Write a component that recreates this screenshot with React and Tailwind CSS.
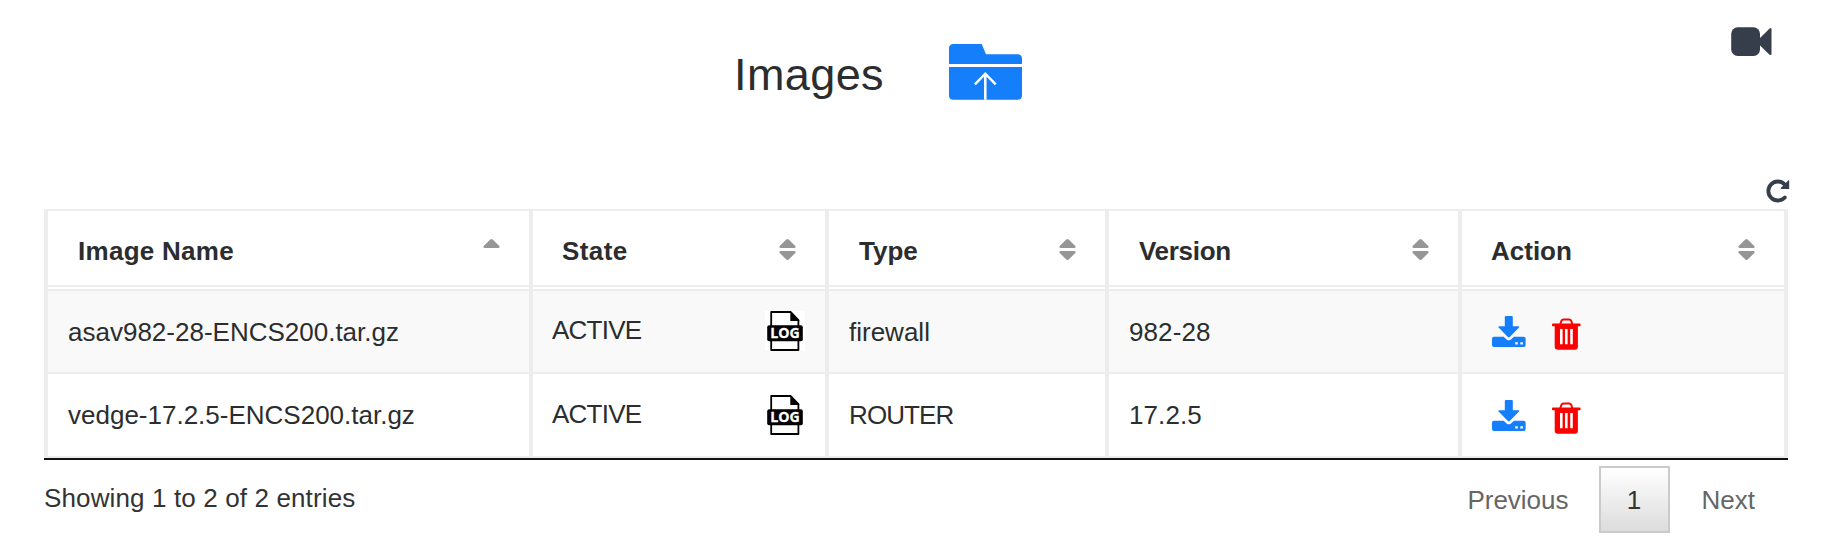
const COLUMNS = [
  { label: "Image Name", text: "ml-px tracking-[0.28px]" },
  { label: "State", text: "tracking-[0.4px]" },
  { label: "Type", text: "ml-px" },
  { label: "Version", text: "ml-px tracking-[-0.3px]" },
  { label: "Action", text: "" },
];
const GRID = "grid grid-cols-[485px_296px_280px_353px_322px]";
const CELL = "border-r-4 border-[#ededed] last:border-r-0";

const ROWS = [
  { name: "asav982-28-ENCS200.tar.gz", state: "ACTIVE", type: "firewall", typeText: "", version: "982-28" },
  { name: "vedge-17.2.5-ENCS200.tar.gz", state: "ACTIVE", type: "ROUTER", typeText: "tracking-[-0.9px]", version: "17.2.5" },
];

function FolderUpload() {
  return (
    <svg width="74" height="56" viewBox="0 0 74 56" className="shrink-0">
      <path fill="#157efb" d="M0 20V4.500Q0 0 4.500 0H32.700L37 10.300H68.500Q73 10.300 73 14.800V20Z" />
      <path fill="#157efb" d="M0 23H73V51.500Q73 55.700 68.500 55.700H4.500Q0 55.700 0 51.500Z" />
      <path fill="none" stroke="#fff" strokeWidth="2.500" d="M36.300 55.800V29.800M25.900 40.300L36.300 29.700L46.700 40.300" />
    </svg>
  );
}

function Camera() {
  return (
    <svg width="42" height="30" viewBox="0 0 42 30">
      <rect x="0.200" y="0.300" width="28.800" height="28.600" rx="6.500" fill="#373e4b" />
      <path fill="#373e4b" d="M28 12L38.600 1.500Q40.500 0.300 40.500 2.500V26.700Q40.500 28.900 38.600 27.700L28 17.500Z" />
    </svg>
  );
}

function Reload() {
  return (
    <svg width="24" height="24" viewBox="0 0 24 24">
      <path fill="none" stroke="#373e4b" strokeWidth="3.800" strokeLinecap="round" d="M18.800 18.500A9.500 9.500 0 1 1 18.600 5.300" />
      <path fill="#373e4b" d="M23.200 1.400V9.400Q23.200 10.100 22.500 10.100H15Q14.300 9.500 15 8.800L22.200 1.400Q22.800 0.800 23.200 1.400Z" />
    </svg>
  );
}

function SortArrows({ upOnly }) {
  return (
    <svg width="17" height="22" viewBox="0 0 17 22">
      <path fill="#969696" d="M7.300 0.500Q8.500 -0.500 9.700 0.500L16.300 7Q17.200 8.900 15.300 9H1.700Q-0.200 8.900 0.700 7Z" />
      {!upOnly && (
        <path fill="#969696" d="M7.300 20.500Q8.500 21.500 9.700 20.500L16.300 14Q17.200 12.100 15.300 12H1.700Q-0.200 12.100 0.700 14Z" />
      )}
    </svg>
  );
}

function LogFile() {
  return (
    <svg width="40" height="40" viewBox="0 0 40 40" className="mr-5 shrink-0">
      <rect width="40" height="40" fill="#fff" />
      <path fill="#fff" stroke="#000" strokeWidth="1.800" strokeLinejoin="round" d="M6.200 1H25.800L33.400 9V39H6.200Z" />
      <path fill="#000" d="M25.300 0.500L34.300 9.500V10H25.300Z" />
      <rect x="2.200" y="14.200" width="35.600" height="16" rx="2" fill="#000" />
      <text
        x="20"
        y="27.300"
        fill="#fff"
        stroke="#fff"
        strokeWidth="0.300"
        textAnchor="middle"
        textLength="29.500"
        lengthAdjust="spacingAndGlyphs"
        className="font-['Open_Sans',sans-serif] text-[15px] font-bold"
      >
        LOG
      </text>
    </svg>
  );
}

function Download() {
  return (
    <svg width="34" height="32" viewBox="0 0 34 32" className="mt-[5px] shrink-0">
      <path fill="#157efb" d="M13.800 0H19.800Q20.800 0 20.800 1V10.300H26.500Q27.900 10.500 27 11.600L18 20.800Q16.800 21.900 15.600 20.800L6.600 11.600Q5.700 10.500 7.100 10.300H12.800V1Q12.800 0 13.800 0Z" />
      <path fill="#157efb" fillRule="evenodd" d="M2 20.800H11.700L14.600 23.400Q16.800 25.200 19 23.400L21.900 20.800H31.600Q33.600 20.800 33.600 22.800V29Q33.600 31 31.600 31H2Q0 31 0 29V22.800Q0 20.800 2 20.800ZM23.200 26.200V28.400H25.800V26.200ZM28.300 26.200V28.400H30.900V26.200Z" />
    </svg>
  );
}

function Trash() {
  return (
    <svg width="29" height="32" viewBox="0 0 29 32" className="mt-[7px] shrink-0">
      <path fill="none" stroke="#f00" strokeWidth="2" d="M8.300 6.300L9.300 3Q9.900 1.500 11.500 1.500H17.100Q18.700 1.500 19.300 3L20.300 6.300" />
      <rect y="5.600" width="28.600" height="2.700" rx="0.800" fill="#f00" />
      <path fill="#f00" d="M2.700 7.500H25.900V28.500Q25.900 31.700 22.700 31.700H5.900Q2.700 31.700 2.700 28.500Z" />
      <path fill="#fff" d="M8 11H10.600V26.300H8ZM13 11H15.600V26.300H13ZM18.200 11H20.800V26.300H18.200Z" />
    </svg>
  );
}

export default function App() {
  return (
    <div className="h-[554px] w-[1832px] overflow-hidden bg-white font-['Liberation_Sans',Arial,sans-serif] text-[26px] leading-[30px] text-[#2b2d2e]">
      <header className="flex h-[178px] items-start pl-[733px] pr-[59px]">
        <h1 className="mt-[49px] w-[216px] pl-px text-[45px] leading-[52px] tracking-[0.4px]">Images</h1>
        <div className="mt-[44px]">
          <FolderUpload />
        </div>
        <div className="ml-auto mt-[27px]">
          <Camera />
        </div>
      </header>

      <div className="flex h-[31px] justify-end pr-[42px] pt-px">
        <Reload />
      </div>

      <main className="mx-11">
        <div className="w-[1744px] border-x-4 border-y-2 border-[#ededed]">
          <div className={GRID}>
            {COLUMNS.map(({ label, text }, i) => (
              <div key={label} className={`${CELL} h-[78px]`}>
                <div className="flex h-[76px] items-center justify-between border-b-2 border-[#ededed] px-[29px] pt-[6px] font-bold">
                  <span className={text}>{label}</span>
                  <span className="-mt-0.5">
                    <SortArrows upOnly={i === 0} />
                  </span>
                </div>
              </div>
            ))}
          </div>
          {ROWS.map((row) => (
            <div
              key={row.name}
              className={`${GRID} group h-[83px] border-t-2 border-[#ededed] odd:h-[84px] even:bg-[#f9f9f9]`}
            >
              <div className={`${CELL} flex items-center pl-5`}>{row.name}</div>
              <div className={`${CELL} flex items-start justify-between pl-[19px] pt-5 group-odd:pt-[21px]`}>
                <span className="mt-1 tracking-[-0.75px]">{row.state}</span>
                <LogFile />
              </div>
              <div className={`${CELL} flex items-center pl-5 ${row.typeText}`}>{row.type}</div>
              <div className={`${CELL} flex items-center pl-5 tracking-[0.1px]`}>{row.version}</div>
              <div className={`${CELL} flex items-start gap-[26px] pl-[30px] pt-5 group-odd:pt-[21px]`}>
                <Download />
                <Trash />
              </div>
            </div>
          ))}
        </div>
        <div className="h-0.5 bg-[#111]" />

        <footer className="flex justify-between">
          <p className="mt-[23px] tracking-[0.13px] text-[#333]">Showing 1 to 2 of 2 entries</p>
          <nav className="mr-[33px] mt-[6px] flex h-[67px] items-center text-[#666]">
            <span className="pt-px">Previous</span>
            <span className="ml-[30px] mr-8 flex h-[67px] w-[71px] items-center justify-center border-2 border-[#cacaca] bg-linear-to-b from-white to-[#dcdcdc] pt-px text-[#333]">
              1
            </span>
            <span className="pt-px">Next</span>
          </nav>
        </footer>
      </main>
    </div>
  );
}
